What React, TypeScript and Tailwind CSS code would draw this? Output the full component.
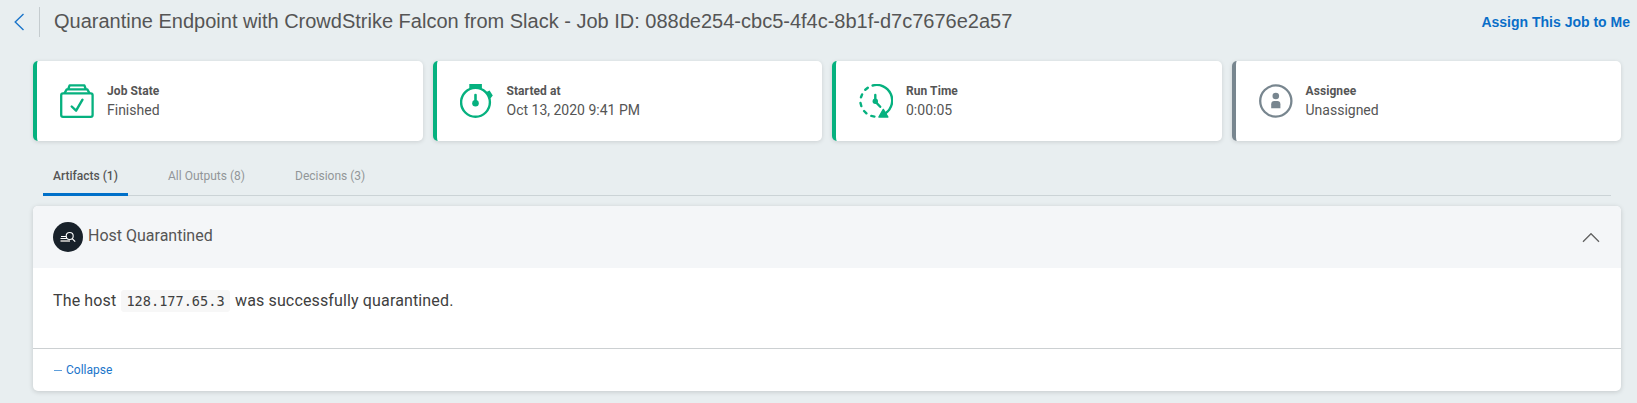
import React from "react";

const roboto = "font-['Roboto','Liberation_Sans',sans-serif]";

function JobStateIcon() {
  return (
    <svg width="34" height="34" viewBox="0 0 34 34" fill="none" stroke="#06b17f" strokeWidth="2.3" strokeLinejoin="round" strokeLinecap="round">
      <rect x="1.2" y="9.4" width="31.4" height="23.4" rx="1.8" />
      <path d="M4.700 8.800 6.700 5.400h20.600L29.300 8.800M8.300 5 9.600 1.300h14.800L25.700 5" />
      <path d="m11.700 22.500 4.400 4.200 6.400-11" strokeWidth="2.400" />
    </svg>
  );
}

function StopwatchIcon() {
  return (
    <svg width="34" height="34" viewBox="0 0 34 34" fill="none" stroke="#06b17f">
      <circle cx="15.5" cy="18.3" r="14.4" strokeWidth="2.4" />
      <path d="M9.300 0h12.600v5H9.300zM25.800 8.200l3.800-1.800 3.200 5-2.400 3z" fill="#06b17f" stroke="none" />
      <path d="M15.500 11v8" strokeWidth="2.600" strokeLinecap="round" />
      <circle cx="15.5" cy="19.2" r="3.3" fill="#06b17f" stroke="none" />
    </svg>
  );
}

function RunTimeIcon() {
  return (
    <svg width="34" height="34" viewBox="0 0 34 34" fill="none" stroke="#06b17f" strokeWidth="2.4" strokeLinecap="round">
      <path d="M13.600 1.500A15.500 15.500 0 0 1 26.800 29" />
      <path d="M8.800 3.800 6.300 5.800M3.100 10.400 2 13.300M1.500 19 2.300 22M5.100 27 7.400 29.300M12.300 31.900 15.400 32.600" />
      <path d="m24.300 25.400 4.600 7.600h-9z" fill="#06b17f" strokeWidth="1.400" strokeLinejoin="round" />
      <path d="M16.300 11v6.500l4.900 5.300" />
      <circle cx="16.3" cy="17.2" r="2.7" fill="#06b17f" stroke="none" />
    </svg>
  );
}

function AssigneeIcon() {
  return (
    <svg width="34" height="34" viewBox="0 0 34 34" fill="#78868f">
      <circle cx="16.8" cy="17" r="15.600" fill="none" stroke="#78868f" strokeWidth="2.300" />
      <circle cx="16.8" cy="12" r="3.300" />
      <path d="M12.200 24.200v-4c0-2 1.200-3.100 3-3.100h3.200c1.800 0 3 1.100 3 3.100v4z" />
    </svg>
  );
}

const cards = [
  { label: "Job State", value: "Finished", border: "border-[#06b17f]", icon: <JobStateIcon /> },
  { label: "Started at", value: "Oct 13, 2020 9:41 PM", border: "border-[#06b17f]", icon: <StopwatchIcon /> },
  { label: "Run Time", value: "0:00:05", border: "border-[#06b17f]", icon: <RunTimeIcon /> },
  { label: "Assignee", value: "Unassigned", border: "border-[#78868f]", icon: <AssigneeIcon /> },
];

export default function App() {
  return (
    <div className={`h-[403px] w-full overflow-hidden bg-[#e8eef0] text-[#555] ${roboto}`}>
      <header className="flex h-[61px] items-start pr-[7px] font-['Liberation_Sans',sans-serif]">
        <svg className="ml-[14px] mt-[12.5px]" width="11" height="18" viewBox="0 0 11 18" fill="none" stroke="#1b75ca" strokeWidth="1.4">
          <path d="M9.500 1 1.200 9l8.300 8" />
        </svg>
        <div className="ml-[14px] mt-[7px] h-[30px] w-px bg-[#c5cccf]" />
        <h1 className="ml-[14px] mt-[7px] whitespace-nowrap text-[20px] leading-[28px]">
          Quarantine Endpoint with CrowdStrike Falcon from Slack - Job ID: 088de254-cbc5-4f4c-8b1f-d7c7676e2a57
        </h1>
        <a className="ml-auto mt-[12px] whitespace-nowrap text-[14px] font-bold leading-[20px] text-[#0a6ec8]">Assign This Job to Me</a>
      </header>

      <section className="ml-[33px] grid w-[1588px] grid-cols-4 gap-[10px]">
        {cards.map((c) => (
          <div key={c.label} className={`flex h-[80px] rounded-[5px] border-l-4 bg-white pl-[23px] pt-[23px] shadow-[0_1px_4px_rgba(0,0,0,0.13)] ${c.border}`}>
            {c.icon}
            <div className="-mt-[1px] ml-[13px] whitespace-nowrap">
              <div className="text-[12px] font-bold leading-[16px] tracking-[0.08px]">{c.label}</div>
              <div className="mt-[1px] text-[14px] leading-[20px]">{c.value}</div>
            </div>
          </div>
        ))}
      </section>

      <nav className="ml-[43px] mt-[20px] flex h-[35px] w-[1568px] items-stretch border-b border-[#cbd3d6] text-[12px] leading-[30px]">
        <div className="-mb-px h-[35px] w-[85px] border-b-[3px] border-[#0070c9] pl-[10px] font-medium">Artifacts (1)</div>
        <div className="ml-[40px] w-[127px] text-[#929698]">All Outputs (8)</div>
        <div className="text-[#929698]">Decisions (3)</div>
      </nav>

      <section className="ml-[33px] mt-[10px] h-[185px] w-[1588px] overflow-hidden rounded-[5px] bg-white shadow-[0_1px_5px_rgba(0,0,0,0.16)]">
        <div className="flex h-[62px] items-center bg-[#f4f6f8] pl-[20px] pr-[21px]">
          <svg width="30" height="30" viewBox="0 0 30 30" fill="none" stroke="#fff">
            <circle cx="15" cy="15" r="15" fill="#18212a" stroke="none" />
            <path d="M8 14.500h6M7.500 16.500h8" />
            <path d="M7.500 19h9.500" stroke="#aaa" strokeWidth="1.800" />
            <circle cx="16.700" cy="14" r="3.500" fill="#18212a" strokeWidth="1.100" />
            <path d="m19.200 16.700 3 3" strokeWidth="1.200" />
          </svg>
          <h2 className="-mt-[3px] ml-[5px] text-[16px] leading-[24px]">Host Quarantined</h2>
          <svg className="ml-auto mt-px" width="18" height="11" viewBox="0 0 18 11" fill="none" stroke="#606060" strokeWidth="1.300">
            <path d="m1 9.700 8-8 8 8" />
          </svg>
        </div>
        <div className="flex h-[80px] items-start pl-[20px] pt-[21px] text-[16px] leading-[24px] tracking-[0.14px] text-[#404040]">
          <span className="w-[64px] whitespace-nowrap">The host</span>
          <code className="ml-[4px] mt-[1px] h-[22px] w-[109px] rounded-[3px] bg-[#f7f7f7] text-center font-['DejaVu_Sans_Mono',monospace] text-[13.6px] leading-[22px] tracking-[0px]">128.177.65.3</code>
          <span className="ml-[5px] whitespace-nowrap">was successfully quarantined.</span>
        </div>
        <div className="flex h-[43px] items-center border-t border-[#ccd0d2] pl-[21px] text-[12px] text-[#1b75ca]">
          <span className="mr-[4px] h-px w-[8px] bg-[#5f9fdb]" />
          <span className="leading-[16px]">Collapse</span>
        </div>
      </section>
    </div>
  );
}
